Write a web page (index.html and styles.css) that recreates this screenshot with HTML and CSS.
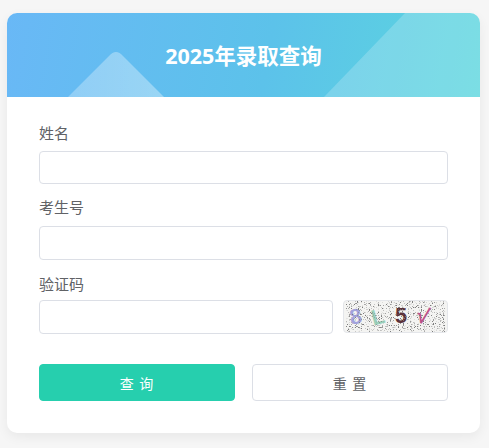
FILE: index.html
```html
<!DOCTYPE html>
<html lang="zh-CN">
<head>
    <meta charset="UTF-8">
    <title>2025年录取查询</title>
    <link rel="stylesheet" href="styles.css">
</head>
<body>
    <div class="query-card">
        <div class="card-header">
            <svg class="header-shapes" viewBox="0 0 473 84" preserveAspectRatio="none">
                <defs>
                    <linearGradient id="hillFill" x1="0" y1="0" x2="1" y2="0">
                        <stop offset="0" stop-color="#fff" stop-opacity="0.28"/>
                        <stop offset="1" stop-color="#fff" stop-opacity="0.36"/>
                    </linearGradient>
                </defs>
                <path d="M61 84 L102 43 Q109 35 116 43 L157 84 Z" fill="url(#hillFill)"/>
                <path d="M317 84 L398 0 L473 0 L473 84 Z" fill="#fff" fill-opacity="0.2"/>
            </svg>
            <h1>2025年录取查询</h1>
        </div>
        <form class="card-body">
            <div class="form-group">
                <label>姓名</label>
                <input type="text" class="form-input">
            </div>
            <div class="form-group group-second">
                <label>考生号</label>
                <input type="text" class="form-input">
            </div>
            <div class="form-group group-third">
                <label>验证码</label>
                <div class="captcha-row">
                    <input type="text" class="form-input">
                    <div class="captcha-image">
                        <svg viewBox="0 0 105 33">
                            <defs>
                                <filter id="speckle" x="0" y="0" width="100%" height="100%">
                                    <feTurbulence type="fractalNoise" baseFrequency="0.85" numOctaves="1" seed="7"/>
                                    <feColorMatrix type="matrix" values="0 0 0 0 0.2  0 0 0 0 0.2  0 0 0 0 0.2  5 5 0 0 -5.4"/>
                                </filter>
                            </defs>
                            <text x="4" y="24" class="captcha-char char-a" transform="rotate(-10 12 18)">8</text>
                            <text x="27" y="25" class="captcha-char char-b" transform="rotate(-14 32 18)">L</text>
                            <text x="52" y="23" class="captcha-char char-c">5</text>
                            <text x="75" y="24" class="captcha-char char-d" transform="rotate(14 82 18)">√</text>
                            <rect width="105" height="33" filter="url(#speckle)"/>
                        </svg>
                    </div>
                </div>
            </div>
            <div class="button-row">
                <button type="button" class="btn btn-primary">查 询</button>
                <button type="reset" class="btn btn-default">重 置</button>
            </div>
        </form>
    </div>
</body>
</html>
```

FILE: styles.css
```css
* {
    margin: 0;
    padding: 0;
    box-sizing: border-box;
    font-family: "Noto Sans", "Noto Sans CJK SC", sans-serif;
}

body {
    background: #f6f6f6;
    padding: 13px 9px 15px 7px;
    height: 448px;
    overflow: hidden;
    color: #606266;
}

.query-card {
    height: 420px;
    background: #fff;
    border-radius: 10px;
    box-shadow: 0 4px 12px rgba(0, 0, 0, 0.06);
    overflow: hidden;
}

.card-header {
    position: relative;
    height: 84px;
    padding-top: 2px;
    background: linear-gradient(100deg, #69b8f6 0%, #5cc2ea 55%, #5bd6de 100%);
    display: flex;
    align-items: center;
    justify-content: center;
}

.header-shapes {
    position: absolute;
    top: 0;
    left: 0;
    width: 100%;
    height: 100%;
}

.card-header h1 {
    position: relative;
    font-size: 21.5px;
    line-height: 30px;
    font-weight: 700;
    color: #fff;
}

.card-body {
    padding: 25px 32px 0;
}

.form-group label {
    display: block;
    font-size: 15px;
    line-height: 22px;
    margin-bottom: 7px;
    color: #606266;
}

.group-second {
    margin-top: 12px;
}

.group-second label {
    margin-bottom: 8px;
}

.group-third {
    margin-top: 13px;
}

.group-third label {
    margin-bottom: 5px;
}

.form-input {
    display: block;
    width: 100%;
    height: 33px;
    background: #fff;
    border: 1px solid #dcdfe6;
    border-radius: 4px;
    outline: none;
}

.group-second .form-input,
.group-third .form-input {
    height: 34px;
}

.captcha-row {
    display: flex;
    gap: 10px;
    align-items: flex-start;
}

.captcha-row .form-input {
    flex: 1;
    width: auto;
    min-width: 0;
}

.captcha-image {
    flex: none;
    width: 105px;
    height: 33px;
    border: 1px solid #e4e6ea;
    border-radius: 4px;
    overflow: hidden;
    background: #f4f4f2;
}

.captcha-image svg {
    display: block;
    width: 100%;
    height: 100%;
}

.captcha-char {
    font-size: 23px;
    font-weight: 700;
    font-family: "Liberation Sans", sans-serif;
}

.char-a {
    fill: #a3a3dc;
}

.char-b {
    fill: #9ad0ba;
}

.char-c {
    fill: #5b3038;
}

.char-d {
    fill: #c0508a;
}

.button-row {
    display: flex;
    gap: 17px;
    margin-top: 30px;
}

.btn {
    flex: 1;
    height: 37px;
    border-radius: 4px;
    font-size: 14px;
    letter-spacing: 1px;
    cursor: pointer;
}

.btn-primary {
    background: #26cfae;
    border: 1px solid #26cfae;
    color: #fff;
}

.btn-default {
    background: #fff;
    border: 1px solid #dcdfe6;
    color: #606266;
}
```
